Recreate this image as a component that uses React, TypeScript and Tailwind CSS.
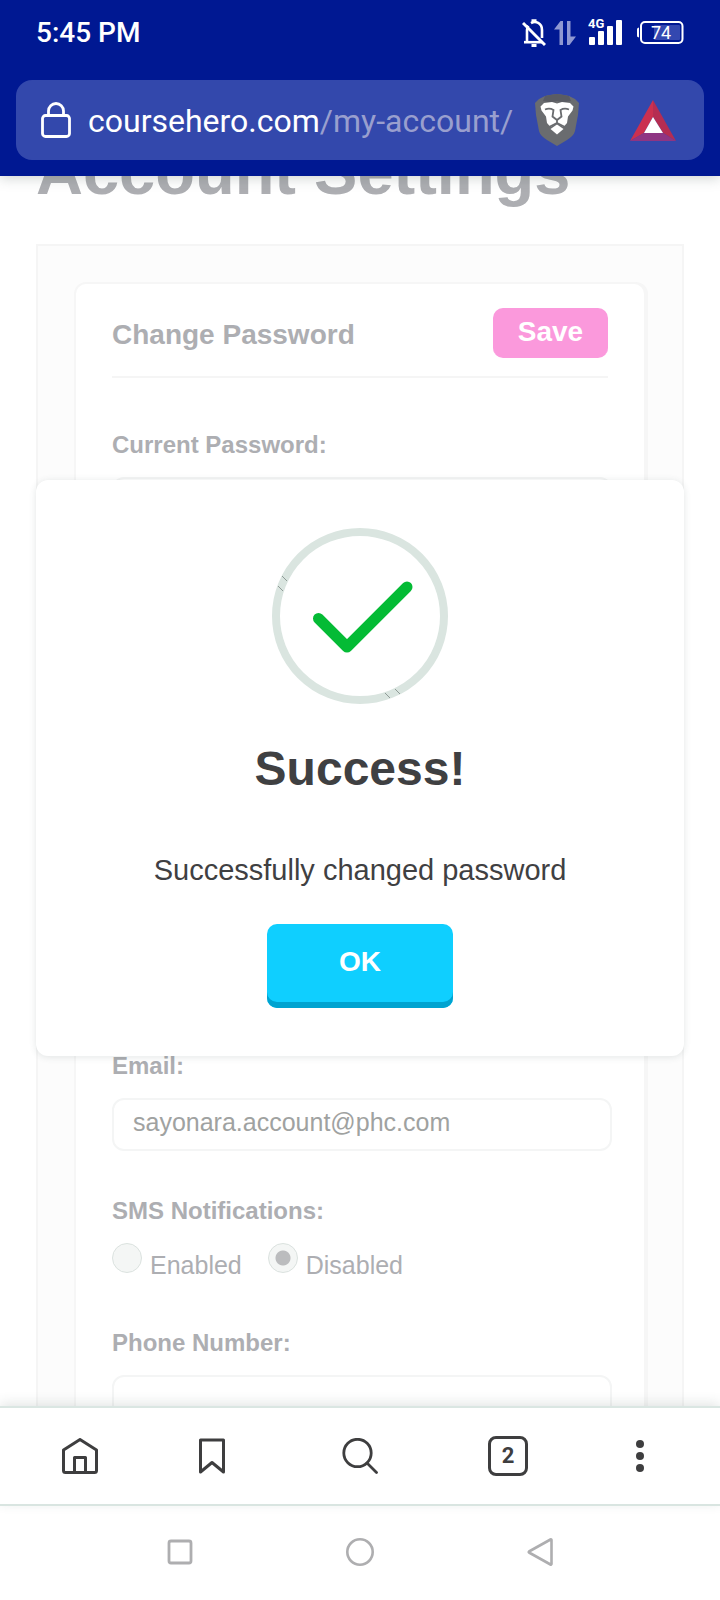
import React, { useState } from 'react';

function StatusBar() {
  return (
    <div className="flex h-[66px] items-center justify-between pl-9 pr-9">
      <span className="text-[28px] leading-8 font-medium">5:45 PM</span>
      <div className="flex items-center gap-2">
        {/* Muted notifications */}
        <svg width="24" height="30" viewBox="0 0 24 30" fill="none" stroke="#fff" strokeWidth="2.600">
          <path d="M5 24V12c0-1.500.5-3 1.300-4.200M9 5.200c4.500-2.600 11-.5 11 6.800v8" />
          <path d="M2 24.200h19" />
          <path d="M1 5l22 22" strokeWidth="3" />
          <path d="M9.500 2.800h5M9.500 27.500h5" strokeWidth="3" />
        </svg>
        {/* Mobile data arrows */}
        <svg width="22" height="26" viewBox="0 0 22 26" fill="#8f98d2">
          <path d="M0 9.500 6.500 1H9v24H5.500V9.500zM13 1h3.500v15.500H22L15.500 25H13z" />
        </svg>
        {/* Signal */}
        <svg className="ml-1" width="36" height="30" viewBox="0 0 36 30" fill="#fff">
          <text x="0" y="10" fontFamily="Roboto, sans-serif" fontSize="13" fontWeight="700">
            4G
          </text>
          <rect x="1" y="19" width="6" height="8" rx="1" />
          <rect x="10" y="13" width="6" height="14" rx="1" />
          <rect x="19" y="8" width="6" height="19" rx="1" />
          <rect x="28" y="2" width="6" height="25" rx="1" />
        </svg>
        {/* Battery */}
        <svg className="ml-1" width="48" height="26" viewBox="0 0 48 26">
          <rect x="5" y="2" width="41.500" height="21" rx="4" fill="none" stroke="#fff" strokeWidth="2" />
          <path d="M3 7.500C1 8 1 8.500 1 10v5c0 1.500 0 2 2 2.500z" fill="#fff" />
          <rect x="18" y="5" width="26" height="15" rx="1" fill="#3348b0" />
          <text x="25" y="19" textAnchor="middle" fill="#fff" fontFamily="Roboto, sans-serif" fontSize="18">
            74
          </text>
        </svg>
      </div>
    </div>
  );
}

function AddressBar() {
  return (
    <div className="mx-4 mt-[14px] flex h-20 items-center rounded-2xl bg-[#3348ac] pl-[25px] pr-7">
      <svg className="shrink-0" width="30" height="36" viewBox="0 0 30 36" fill="none" stroke="#fff" strokeWidth="2.800">
        <rect x="1.500" y="13.500" width="27" height="21" rx="3" />
        <path d="M7.500 13V9a7.500 7.500 0 0 1 15 0v4" />
      </svg>
      <button type="button" className="ml-[17px] min-w-0 flex-1 truncate pt-[2px] text-left text-[32px] leading-10">
        coursehero.com<span className="text-[#999fce]">/my-account/</span>
      </button>
      <button type="button" aria-label="Shields" className="shrink-0">
        <svg width="44" height="52" viewBox="0 0 44 52">
          <path d="M0 9l4-4 6-3 5-1 7-1 7 1 5 1 6 3 4 4-1 12-3 16c-1 4-4 6.500-8 9l-10 6-10-6c-4-2.500-7-5-8-9L1 21z" fill="#6a6c6f" />
          <path d="M10 2l5-1 7-1 7 1 5 1 2 5-8 1.500L22 7l-6 1.500L8 7z" fill="#5a5c63" />
          <path d="M5.500 12.500 9 9l8-1 5 1.500L27 8l8 1 3.500 3.500-1 4-4.500 6-1 6.500-3.500 4-6.500-4-6.500 4-3.500-4-1-6.500-4.500-6z" fill="#fff" />
          <path d="M22 30.500l6.500 4.500-6.500 5.500-6.500-5.500z" fill="#fff" />
          <path d="M10 15.500c3-1.200 6-1 8.500.5l-1 6.500L22 26l4.500-3.500-1-6.500c2.500-1.500 5.500-1.700 8.500-.5M22 26v4M13 33.500l9-4.500 9 4.500" fill="none" stroke="#6a6c6f" strokeWidth="1.800" />
        </svg>
      </button>
      <button type="button" aria-label="Rewards" className="ml-[51px] shrink-0">
        <svg width="46" height="41" viewBox="0 0 46 41">
          <path d="M23 0v17l-9 16L0 41z" fill="#cb3050" />
          <path d="M23 0l23 41-13-8-10-16z" fill="#b52d52" />
          <path d="M0 41l14-8h19l13 8z" fill="#8f3583" />
          <path d="M23 17l10 16H14z" fill="#fff" />
        </svg>
      </button>
    </div>
  );
}

const labelClass = 'block text-2xl leading-8 font-bold text-[#adaeb2]';
const inputClass =
  'mt-4 block h-[53px] w-[calc(100%+4px)] rounded-xl border-2 border-[#f4f5f5] bg-white px-[19px] pb-1 text-[25px] text-[#9fa2a1] outline-none';

function AccountSettings() {
  const [sms, setSms] = useState('disabled');
  const radioClass =
    'h-[30px] w-[30px] appearance-none rounded-full border border-[#dbe2df] bg-[#f4f6f5] checked:bg-[radial-gradient(circle,#bbbcbe_7px,#f4f6f5_8px)]';

  return (
    <div className="px-9">
      <h1 className="-mt-9 text-[65px] leading-[64px] font-bold whitespace-nowrap text-[#adaeb2]">
        Account Settings
      </h1>
      <div className="mt-10 border-2 border-[#f5f5f5] bg-[#fcfcfc] p-9">
        <form className="rounded-xl border-2 border-[#f6f6f6] bg-white px-9 pt-6 pb-9 shadow-[2px_0_0_#f6f6f6]">
          {/* Change password */}
          <div className="flex items-start justify-between border-b-2 border-[#f5f5f5] pb-[14px]">
            <h2 className="text-[28px] leading-[54px] font-bold text-[#adaeb2]">Change Password</h2>
            <button
              type="button"
              className="h-[50px] w-[115px] rounded-[10px] border-b-2 border-[#fb99dc] bg-[#fb99dc] text-[28px] leading-8 font-bold text-white"
            >
              Save
            </button>
          </div>
          <div className="mt-[51px]">
            <label htmlFor="current-password" className={labelClass}>
              Current Password:
            </label>
            <input id="current-password" type="password" className={inputClass} />
          </div>

          {/* Contact details */}
          <div className="mt-[520px]">
            <label htmlFor="email" className={labelClass}>
              Email:
            </label>
            <input id="email" type="email" defaultValue="sayonara.account@phc.com" className={inputClass} />
          </div>
          <div className="mt-11" role="radiogroup" aria-labelledby="sms-label">
            <span id="sms-label" className={labelClass}>
              SMS Notifications:
            </span>
            <div className="mt-4 flex h-10 gap-[26px] text-[25px] leading-9 text-[#adaeb2]">
              <label className="flex gap-2">
                <input
                  type="radio"
                  name="sms"
                  checked={sms === 'enabled'}
                  onChange={() => setSms('enabled')}
                  className={radioClass}
                />
                <span className="self-end">Enabled</span>
              </label>
              <label className="flex gap-2">
                <input
                  type="radio"
                  name="sms"
                  checked={sms === 'disabled'}
                  onChange={() => setSms('disabled')}
                  className={radioClass}
                />
                <span className="self-end">Disabled</span>
              </label>
            </div>
          </div>
          <div className="mt-11">
            <label htmlFor="phone" className={labelClass}>
              Phone Number:
            </label>
            <input id="phone" type="tel" className={inputClass} />
          </div>
        </form>
      </div>
    </div>
  );
}

function SuccessDialog() {
  return (
    <div
      role="dialog"
      aria-labelledby="dialog-title"
      className="absolute inset-x-9 top-[304px] flex flex-col items-center rounded-xl bg-white py-12 text-[#3f4042] shadow-[0_1px_7px_rgba(60,80,75,0.14)]"
    >
      <svg width="176" height="176" viewBox="0 0 176 176" fill="none">
        <circle cx="88" cy="88" r="84" stroke="#dae5e0" strokeWidth="8" />
        <path d="M10 48l5 5M6 58l5 5M113 165l5 5M123 161l5 5" stroke="#8f9a96" strokeWidth="1" />
        <path d="M46.500 90.500 75 119l60-60" stroke="#04bb35" strokeWidth="11" strokeLinecap="round" strokeLinejoin="round" />
      </svg>
      <h2 id="dialog-title" className="mt-[37px] text-5xl leading-[56px] font-bold">
        Success!
      </h2>
      <p className="mt-[53px] text-[29px] leading-10">Successfully changed password</p>
      <button
        type="button"
        className="mt-[34px] h-[84px] w-[186px] rounded-[10px] bg-[#0fcfff] pb-2 text-[28px] leading-8 font-bold text-white shadow-[inset_0_-6px_0_#00a3d0]"
      >
        OK
      </button>
    </div>
  );
}

function BrowserToolbar() {
  return (
    <nav className="relative grid h-[98px] shrink-0 grid-cols-[116fr_148fr_148fr_148fr_116fr] place-items-center border-b-2 border-[#d9e5e1] bg-white px-[22px] shadow-[0_-2px_0_#dae6e2,0_-4px_12px_rgba(60,80,75,0.16)]">
      <button type="button" aria-label="Home">
        <svg width="36" height="36" viewBox="0 0 36 36" fill="none" stroke="#3e3e3f" strokeWidth="3" strokeLinejoin="round">
          <path d="M18 1.500 34.500 12v20.500a2 2 0 0 1-2 2h-29a2 2 0 0 1-2-2V12z" />
          <path d="M12.500 34.500v-15h11v15" />
        </svg>
      </button>
      <button type="button" aria-label="Bookmarks">
        <svg width="26" height="36" viewBox="0 0 26 36" fill="none" stroke="#3e3e3f" strokeWidth="3" strokeLinejoin="round">
          <path d="M1.500 2h23v32L13 24.500 1.500 34z" />
        </svg>
      </button>
      <button type="button" aria-label="Search">
        <svg width="36" height="36" viewBox="0 0 36 36" fill="none" stroke="#3e3e3f" strokeWidth="2.800" strokeLinecap="round">
          <circle cx="15.500" cy="15" r="13.700" />
          <path d="M25 25l9.500 9.500" />
        </svg>
      </button>
      <button
        type="button"
        aria-label="Tabs"
        className="flex h-10 w-10 items-center justify-center rounded-lg border-3 border-[#3e3e3f] font-[Roboto,sans-serif] text-[22px] leading-8 font-bold text-[#3e3e3f]"
      >
        2
      </button>
      <button type="button" aria-label="Menu">
        <svg width="8" height="32" viewBox="0 0 8 32" fill="#3e3e3f">
          <circle cx="4" cy="4" r="4" />
          <circle cx="4" cy="16" r="4" />
          <circle cx="4" cy="28" r="4" />
        </svg>
      </button>
    </nav>
  );
}

function SystemNav() {
  return (
    <nav className="grid h-[94px] shrink-0 grid-cols-3 place-items-center bg-white px-[90px] pb-[2px]">
      <button type="button" aria-label="Recent apps">
        <svg width="26" height="26" viewBox="0 0 26 26" fill="none" stroke="#aeaeb0" strokeWidth="2.800">
          <rect x="2" y="2" width="22" height="22" rx="2" />
        </svg>
      </button>
      <button type="button" aria-label="Home screen">
        <svg width="28" height="28" viewBox="0 0 28 28" fill="none" stroke="#aeaeb0" strokeWidth="2.600">
          <circle cx="14" cy="14" r="12.700" />
        </svg>
      </button>
      <button type="button" aria-label="Back">
        <svg width="26" height="28" viewBox="0 0 26 28" fill="none" stroke="#aeaeb0" strokeWidth="2.600" strokeLinejoin="round">
          <path d="M24.500 2v24a.7.700 0 0 1-1 .5L2 14.500a.6.600 0 0 1 0-1l21.500-12a.7.700 0 0 1 1 .5z" />
        </svg>
      </button>
    </nav>
  );
}

export default function App() {
  return (
    <div className="flex h-screen flex-col overflow-hidden bg-white font-['Liberation_Sans',Arial,sans-serif]">
      <header className="relative z-10 shrink-0 bg-[#001892] pb-4 font-[Roboto,sans-serif] text-white shadow-[0_2px_12px_rgba(60,80,75,0.25)]">
        <StatusBar />
        <AddressBar />
      </header>
      <main className="relative min-h-0 flex-1 overflow-hidden">
        <AccountSettings />
        <SuccessDialog />
      </main>
      <BrowserToolbar />
      <SystemNav />
    </div>
  );
}
